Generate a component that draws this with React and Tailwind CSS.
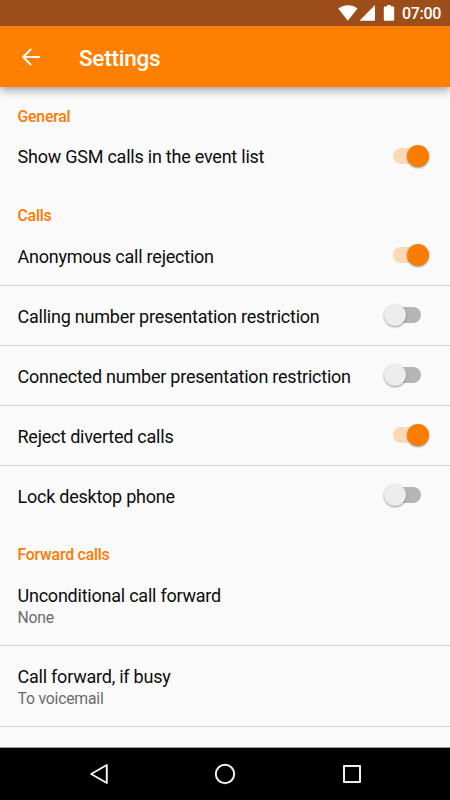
import React, { useState } from "react";

const SECTIONS = [
  {
    title: "General",
    headerClass: "h-10",
    labelClass: "pt-0",
    items: [{ id: "gsm", label: "Show GSM calls in the event list" }],
  },
  {
    title: "Calls",
    headerClass: "h-[39px]",
    labelClass: "pt-[2px]",
    items: [
      { id: "anonymous", label: "Anonymous call rejection" },
      { id: "calling", label: "Calling number presentation restriction" },
      { id: "connected", label: "Connected number presentation restriction" },
      { id: "diverted", label: "Reject diverted calls" },
      { id: "lock", label: "Lock desktop phone" },
    ],
  },
  {
    title: "Forward calls",
    headerClass: "h-[39px]",
    items: [
      { id: "unconditional", label: "Unconditional call forward", value: "None" },
      { id: "busy", label: "Call forward, if busy", value: "To voicemail" },
    ],
  },
];

function Toggle({ checked, label, onChange }) {
  return (
    <button
      role="switch"
      aria-checked={checked}
      aria-label={label}
      onClick={onChange}
      className="relative h-[23px] w-[44px] shrink-0"
    >
      <span
        className={`absolute top-[3px] h-4 rounded-full ${
          checked ? "left-[7.5px] w-[30px] bg-[#fcd9b6]" : "left-[4px] w-[31.5px] bg-[#b5b5b5]"
        }`}
      />
      <span
        className={`absolute top-0 size-[22px] rounded-full shadow-[0_1px_2px_rgba(0,0,0,0.4)] ${
          checked ? "left-[21.5px] bg-[#fb7d00]" : "left-[-1px] bg-[#ececec]"
        }`}
      />
    </button>
  );
}

function StatusBar() {
  return (
    <div className="relative z-20 flex h-[26px] shrink-0 items-center justify-end bg-[#9c4d1a] pr-[9px] text-white">
      <svg width="58" height="26" viewBox="0 0 58 26" fill="currentColor">
        <path d="M0.200 8.600C6 4 14.500 4 19.500 8.600L9.800 20.700Z" />
        <path d="M21.500 20.700L37 5V20.700Z" />
        <path d="M49 5h4v1.600h2.200q1 0 1 1V19.700q0 1-1 1h-8.400q-1 0-1-1V7.600q0-1 1-1H49Z" />
      </svg>
      <span className="mt-[2px] ml-[6px] text-[16px] leading-none font-medium tracking-[-0.3px]">07:00</span>
    </div>
  );
}

function AppBar() {
  return (
    <header className="z-10 flex h-[61px] shrink-0 items-center bg-[#ff8000] pl-[22px] text-white shadow-[0_3px_9px_rgba(0,0,0,0.38)]">
      <button aria-label="Back">
        <svg width="18" height="18" viewBox="0 0 18 18" fill="none" stroke="currentColor" strokeWidth="2">
          <path d="M18 9H1.500M9.200 0.900L1.100 9L9.200 17.100" />
        </svg>
      </button>
      <h1 className="mt-[3px] ml-[39px] text-[22.5px] leading-[26px] font-medium tracking-[-0.25px]">Settings</h1>
    </header>
  );
}

function NavBar() {
  return (
    <nav className="flex h-[53px] shrink-0 items-center justify-between border-t border-[#9a9a9a] bg-black pr-[88.500px] pl-[88.500px] text-[#f0f0f0]">
      <svg width="20" height="22" viewBox="0 0 20 22" fill="none" stroke="currentColor" strokeWidth="2" strokeLinejoin="round">
        <path d="M17.800 2V20L2.200 11Z" />
      </svg>
      <svg width="22" height="22" viewBox="0 0 22 22" fill="none" stroke="currentColor" strokeWidth="2">
        <circle cx="11" cy="11" r="9.2" />
      </svg>
      <svg width="20" height="20" viewBox="0 0 20 20" fill="none" stroke="currentColor" strokeWidth="2" strokeLinejoin="round">
        <path d="M2 2H18V18H2Z" />
      </svg>
    </nav>
  );
}

export default function App() {
  const [enabled, setEnabled] = useState({
    gsm: true,
    anonymous: true,
    calling: false,
    connected: false,
    diverted: true,
    lock: false,
  });

  const toggle = (id) => setEnabled((prev) => ({ ...prev, [id]: !prev[id] }));

  return (
    <div className="flex h-screen w-full flex-col overflow-hidden bg-[#fafafa] font-['Roboto',sans-serif] text-[#0c0c0c]">
      <StatusBar />
      <AppBar />

      <main className="min-h-0 flex-1 overflow-hidden">
        {SECTIONS.map((section) => (
          <section key={section.title}>
            <h2
              className={`flex items-end pl-[17.500px] text-[15.75px] leading-[20px] font-medium tracking-[-0.18px] text-[#ff7900] ${section.headerClass}`}
            >
              {section.title}
            </h2>

            {section.items.map((item, i) => {
              const isLast = i === section.items.length - 1;

              // Forwarding rows show their current value under the label
              if (item.value) {
                return (
                  <div key={item.id} className="h-[81px] border-b border-[#d5d5d5] pt-[20px] pl-[17.500px]">
                    <p className="text-[18px] leading-[22px] tracking-[-0.23px]">{item.label}</p>
                    <p className="text-[15.75px] leading-[22px] tracking-[-0.2px] text-[#6b6b6b]">{item.value}</p>
                  </div>
                );
              }

              return (
                <div
                  key={item.id}
                  className={`flex h-[60px] items-center justify-between border-b pr-[21px] pl-[17.500px] ${
                    isLast ? "border-transparent" : "border-[#d5d5d5]"
                  }`}
                >
                  <span className={`text-[18px] leading-[22px] tracking-[-0.23px] ${section.labelClass}`}>
                    {item.label}
                  </span>
                  <Toggle checked={enabled[item.id]} label={item.label} onChange={() => toggle(item.id)} />
                </div>
              );
            })}
          </section>
        ))}
      </main>

      <NavBar />
    </div>
  );
}
